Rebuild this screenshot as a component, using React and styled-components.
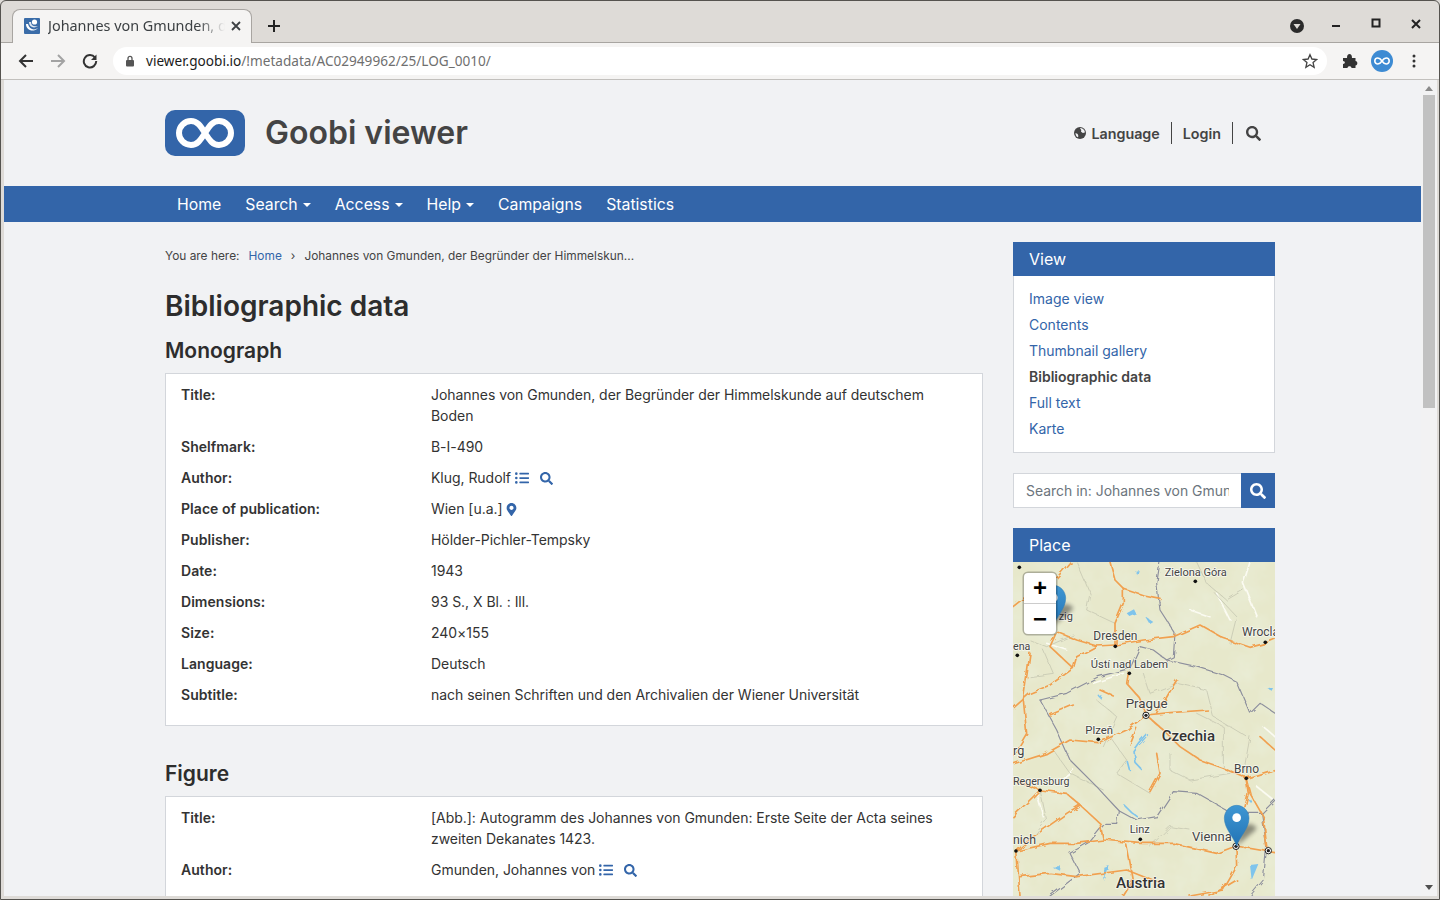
import styled, { createGlobalStyle } from 'styled-components';
import { FaSearch, FaListUl, FaMapMarkerAlt } from 'react-icons/fa';

const blue = '#3365a9';

const GlobalStyle = createGlobalStyle`
  html, body {
    margin: 0;
    height: 100%;
    overflow: hidden;
    background: #dedbd7;
  }
  * { box-sizing: border-box; }
`;

const Window = styled.div`
  width: 1440px;
  height: 900px;
  display: flex;
  flex-direction: column;
  border: 1px solid #55534f;
  border-radius: 6px 6px 0 0;
  background: #dedbd7;
  overflow: hidden;
  font-family: Inter, sans-serif;
`;

const TabStrip = styled.div`
  height: 42px;
  flex: none;
  display: flex;
  align-items: flex-end;
  padding-left: 11px;
  border-bottom: 1px solid #a8a5a1;
`;

const Tab = styled.div`
  width: 240px;
  height: 34px;
  margin-bottom: -1px;
  display: flex;
  align-items: center;
  padding: 0 9px 2px 11px;
  background: #f5f4f3;
  border: 1px solid #a8a5a1;
  border-bottom: none;
  border-radius: 8px 8px 0 0;
`;

const TabTitle = styled.span`
  width: 177px;
  margin-left: 8px;
  white-space: nowrap;
  overflow: hidden;
  font: 14.4px "Noto Sans", sans-serif;
  color: #3c4043;
  -webkit-mask-image: linear-gradient(to right, #000 150px, transparent 177px);
  mask-image: linear-gradient(to right, #000 150px, transparent 177px);
`;

const ChromeIcon = styled.svg`
  flex: none;
  display: block;
`;

const NewTab = styled.div`
  margin: 0 0 9px 15px;
  display: flex;
`;

const WindowControls = styled.div`
  margin-left: auto;
  height: 100%;
  display: flex;
  align-items: center;
  padding: 0 15px 0 0;
  gap: 24px;
`;

const Toolbar = styled.div`
  height: 37px;
  flex: none;
  display: flex;
  align-items: center;
  padding: 0 16px 0 17px;
  background: #f5f4f3;
  border-bottom: 1px solid #c2c0bd;
`;

const NavButtons = styled.div`
  display: flex;
  gap: 16px;
  align-items: center;
`;

const Omnibox = styled.div`
  width: 1214px;
  height: 28px;
  margin-left: 15px;
  display: flex;
  align-items: center;
  padding: 0 9px 0 12px;
  background: #fff;
  border-radius: 14px;
`;

const Url = styled.span`
  margin: -2px 0 0 11px;
  font: 13.6px "Noto Sans", sans-serif;
  color: #6f6f6f;
  b { font-weight: 400; color: #1b1b1b; }
`;

const ToolbarRight = styled.div`
  margin-left: 15px;
  display: flex;
  align-items: center;
  gap: 13px;
`;

const Viewport = styled.div`
  flex: 1;
  min-height: 0;
  display: flex;
  margin: 0 2px 3px 3px;
  background: #f1f2f4;
`;

const PageArea = styled.div`
  flex: 1;
  min-width: 0;
  overflow: hidden;
`;

const Scrollbar = styled.div`
  width: 16px;
  flex: none;
  display: flex;
  flex-direction: column;
  align-items: center;
  padding: 6px 0;
  background: #f2f2f3;
`;

const ScrollThumb = styled.div`
  width: 12px;
  height: 313px;
  margin: 4px 0 auto;
  background: #c1c1c1;
`;

const Inner = styled.div`
  width: 1110px;
  margin-left: 161px;
`;

const Masthead = styled.header`
  height: 106px;
  display: flex;
  align-items: flex-start;
  padding-top: 30px;
`;

const Logo = styled.svg`
  display: block;
  flex: none;
`;

const Brand = styled.div`
  margin-left: 20px;
  font-size: 32px;
  font-weight: 600;
  line-height: 46px;
  color: #444;
`;

const UserNav = styled.div`
  margin-left: auto;
  margin-right: 14px;
  margin-top: 12px;
  display: flex;
  align-items: center;
  font-size: 14.3px;
  font-weight: 600;
  color: #444;
`;

const UserItem = styled.div`
  height: 22px;
  display: flex;
  align-items: center;
  gap: 5px;
  padding: 0 11px;
  border-left: ${(p) => (p.$divider ? '1px solid #444' : 'none')};
  &:last-child { padding-right: 0; padding-left: 13px; }
`;

const MainNav = styled.nav`
  height: 36px;
  display: flex;
  align-items: center;
  padding-left: 173px;
  gap: 24px;
  background: ${blue};
`;

const NavItem = styled.div`
  display: flex;
  align-items: center;
  font-size: 15.8px;
  color: #fff;
`;

const Caret = styled.span`
  width: 0;
  height: 0;
  margin: 1px 0 0 5px;
  border-top: 4px solid #fff;
  border-left: 4px solid transparent;
  border-right: 4px solid transparent;
`;

const Columns = styled.div`
  display: flex;
  gap: 30px;
`;

const Main = styled.main`
  width: 818px;
  flex: none;
`;

const Breadcrumb = styled.div`
  margin-top: 26px;
  height: 15px;
  display: flex;
  align-items: center;
  font-size: 11.9px;
  line-height: 15px;
  color: #444;
`;

const Crumb = styled.a`
  color: ${blue};
  margin-left: 9px;
`;

const CrumbSep = styled.span`
  margin: 0 9px;
`;

const Title = styled.h1`
  margin: 26px 0 0;
  font-size: 28px;
  line-height: 35px;
  font-weight: 600;
  color: #2d2d2d;
`;

const SectionTitle = styled.h2`
  margin: ${(p) => p.$top}px 0 8px;
  font-size: 21px;
  line-height: 28px;
  font-weight: 600;
  color: #2d2d2d;
`;

const Card = styled.section`
  padding: 10px 15px 20px;
  background: #fff;
  border: 1px solid #d3d6db;
  display: flex;
  flex-direction: column;
  gap: 10px;
`;

const Row = styled.div`
  display: grid;
  grid-template-columns: 250px 1fr;
  font-size: 14px;
  line-height: 21px;
  color: #333;
`;

const Label = styled.div`
  font-weight: 600;
  letter-spacing: 0.05px;
`;

const Value = styled.div`
  display: block;
  letter-spacing: -0.04px;
`;

const InlineIcon = styled.span`
  color: ${blue};
  margin-left: ${(p) => p.$left || 4}px;
  font-size: 14px;
  svg { vertical-align: -2px; }
`;

const Sidebar = styled.aside`
  width: 262px;
  flex: none;
  padding-top: 20px;
`;

const WidgetHead = styled.div`
  height: 34px;
  display: flex;
  align-items: center;
  padding-left: 16px;
  font-size: 16px;
  color: #fff;
  background: ${blue};
`;

const ViewList = styled.div`
  height: 177px;
  padding: 10px 15px 0;
  display: flex;
  flex-direction: column;
  background: #fff;
  border: 1px solid #d3d6db;
  border-top: none;
`;

const ViewLink = styled.a`
  height: 26px;
  font-size: 14px;
  line-height: 26px;
  font-weight: ${(p) => (p.$active ? 600 : 400)};
  color: ${(p) => (p.$active ? '#444' : blue)};
`;

const SearchBox = styled.div`
  margin: 20px 0;
  height: 35px;
  display: flex;
`;

const SearchInput = styled.input`
  flex: 1;
  min-width: 0;
  padding: 0 12px;
  border: 1px solid #d3d6db;
  border-right: none;
  background: #fff;
  outline: none;
  font: 13.95px Inter, sans-serif;
  &::placeholder { color: #6c757d; opacity: 1; }
`;

const SearchButton = styled.div`
  width: 34px;
  flex: none;
  display: flex;
  align-items: center;
  justify-content: center;
  background: ${blue};
  color: #fff;
  font-size: 16px;
`;

const MapFrame = styled.div`
  position: relative;
  height: 334px;
  background: #e7e8cb;
  overflow: hidden;
`;

const MapArt = styled.svg`
  display: block;
  width: 262px;
  height: 334px;
  font-family: Roboto, sans-serif;
  text {
    fill: #444;
    paint-order: stroke;
    stroke: rgba(255, 255, 255, 0.7);
    stroke-width: 5px;
    stroke-linejoin: round;
  }
`;

const ZoomControl = styled.div`
  position: absolute;
  top: 11px;
  left: 11px;
  width: 32px;
  height: 61px;
  display: flex;
  flex-direction: column;
  background: #fff;
  border-radius: 4px;
  box-shadow: 0 0 0 1.5px rgba(0, 0, 0, 0.25);
`;

const ZoomButton = styled.div`
  flex: 1;
  display: flex;
  align-items: center;
  justify-content: center;
  font: 700 24px "Liberation Sans", sans-serif;
  color: #000;
  & + & { border-top: 1px solid #ccc; }
`;

const monograph = [
  ['Title:', 'Johannes von Gmunden, der Begründer der Himmelskunde auf deutschem Boden'],
  ['Shelfmark:', 'B-I-490'],
  ['Author:', 'Klug, Rudolf', 'person'],
  ['Place of publication:', 'Wien [u.a.]', 'place'],
  ['Publisher:', 'Hölder-Pichler-Tempsky'],
  ['Date:', '1943'],
  ['Dimensions:', '93 S., X Bl. : Ill.'],
  ['Size:', '240×155'],
  ['Language:', 'Deutsch'],
  ['Subtitle:', 'nach seinen Schriften und den Archivalien der Wiener Universität'],
];

const figure = [
  ['Title:', '[Abb.]: Autogramm des Johannes von Gmunden: Erste Seite der Acta seines zweiten Dekanates 1423.'],
  ['Author:', 'Gmunden, Johannes von', 'person'],
];

const views = ['Image view', 'Contents', 'Thumbnail gallery', 'Bibliographic data', 'Full text', 'Karte'];

// map traces, in the coordinates of the viewBox below
const roads = [
  'M300 6 L315 60 L340 85 L400 105 L450 115',
  'M340 85 L340 130 L315 190 L315 255',
  'M315 255 L400 240 L490 230 L570 195 L640 235 L720 262 L765 250 L795 238',
  'M315 255 L260 258 L200 290 L190 325 L120 375 L60 400 L9 445',
  'M140 215 L200 240 L260 258',
  'M355 340 L350 370 L385 410 L408 465',
  'M408 465 L480 458 L595 450',
  'M408 465 L350 510 L265 548 L180 540 L110 580 L9 612',
  'M408 465 L460 510 L510 560 L570 600 L640 625 L708 655 L795 628',
  'M708 655 L720 700 L760 770 L770 860',
  'M708 655 L715 700 L690 800 L678 858',
  'M90 690 L170 700 L210 735 L270 790 L280 840 L390 850 L490 850 L620 880 L678 858',
  'M20 873 L70 830 L170 760 L210 735',
  'M20 873 L120 850 L200 850 L280 840',
  'M350 855 L370 960 L340 1008',
  'M678 858 L795 878',
  'M678 858 L680 920 L640 990 L540 1008',
  'M60 280 L40 420 L50 520 L9 590',
  'M90 690 L9 660',
  'M440 580 L450 640 L420 695',
  'M500 360 L465 420 L440 458',
  'M380 505 L360 555',
  'M180 6 L110 90 L60 100 L9 140',
  'M140 215 L120 260 L190 325',
  'M120 465 L190 435',
  'M270 390 L310 408',
  'M750 530 L795 570',
  'M20 873 L30 1008',
  'M200 950 L350 930 L450 970',
  'M30 950 L120 940 L200 950',
  'M9 770 L90 690',
  'M600 1008 L680 960',
];

const borders = [
  'M90 420 L140 510 L180 600 L260 680 L325 750 L320 790 L285 790 L240 845 L180 880 L210 940 L120 1008',
  'M325 750 L380 780 L440 770 L490 695 L560 700 L640 745 L660 760 L755 760 L795 720',
  'M90 420 L170 400 L265 350 L360 325 L390 260 L430 270 L470 300 L490 290 L495 220 L450 150 L440 70 L450 6',
  'M470 300 L560 320 L640 345 L680 365 L720 460 L750 430 L795 460',
  'M755 760 L770 860 L760 960 L720 1008',
];

const minorRoads = [
  'M560 6 L590 70 L650 120 L700 90',
  'M610 95 L680 170 L660 250',
  'M200 6 L240 100 L230 150 L315 190',
  'M60 240 L110 260 L190 225',
  'M500 370 L590 390 L610 470 L710 530',
  'M300 530 L350 600 L320 640 L420 700',
  'M480 580 L480 630 L540 660 L660 640',
  'M90 690 L110 780 L70 830',
  'M420 860 L480 800 L540 810',
  'M130 570 L180 640 L280 690',
  'M400 340 L420 400 L500 370',
  'M560 460 L640 500 L640 620',
  'M720 530 L700 640',
  'M100 270 L130 340 L60 350',
  'M280 560 L320 470 L260 420',
];

const whiteRoads = [
  'M620 100 L660 180',
  'M720 6 L700 70 L740 170',
  'M250 370 L340 340',
  'M80 700 L100 770',
  'M150 660 L190 630',
  'M760 500 L795 530',
  'M740 680 L790 720',
  'M540 150 L600 170',
  'M110 250 L170 270',
];

const lakeLines = [
  'M412 525 L390 550 L372 575 L378 610 L392 625',
  'M345 738 L362 755 L382 770',
  'M352 605 L358 628',
];

const lakes = [
  'M350 160 L372 148 L378 160 L358 168 Z',
  'M408 172 L430 186 L420 192 Z',
  'M376 32 L386 30 L382 46 Z',
  'M262 405 L272 402 L268 414 Z',
  'M720 915 L745 912 L725 960 Z',
  'M280 920 L296 915 L280 960 Z',
  'M125 920 L152 918 L150 932 Z',
  'M710 715 L726 720 L720 726 Z',
  'M770 385 L790 382 L785 392 Z',
];

const labels = [
  ['Zielona Góra', 464, 48, 33],
  ['Dresden', 250, 241, 36],
  ['Wrocla', 696, 228, 36],
  ['ena', 9, 270, 32],
  ['Ústí nad Labem', 242, 325, 33.5],
  ['Prague', 347, 444, 40],
  ['Plzeň', 226, 521, 34],
  ['rg', 9, 584, 38],
  ['Regensburg', 9, 676, 32],
  ['Brno', 672, 638, 36],
  ['Linz', 359, 820, 33],
  ['Vienna', 546, 844, 39],
  ['nich', 9, 852, 37],
  ['zig', 146, 179, 33],
];

const towns = [
  [556, 64], [28, 22], [316, 259], [22, 286], [358, 340], [766, 247], [265, 538],
  [90, 691], [709, 655], [391, 838], [18, 873],
];

const capitals = [[408, 466], [678, 859], [775, 872]];

function Pin({ x, y }) {
  return (
    <g transform={`translate(${x} ${y})`}>
      <path d="M0 0 L52 -44 Q70 -58 40 -66 L18 -62 Z" fill="#000" opacity="0.4" filter="url(#soft)" />
      <path
        d="M0 0 C-8 -26 -37 -52 -37 -83 C-37 -105 -20 -122 0 -122 C20 -122 37 -105 37 -83 C37 -52 8 -26 0 0 Z"
        fill="url(#pinBlue)"
        stroke="#2a7ab5"
        strokeWidth="1.5"
      />
      <circle cx="0" cy="-85" r="13" fill="#fff" />
    </g>
  );
}

function MapSvg() {
  return (
    <MapArt viewBox="9 6 786 1002">
      <defs>
        <linearGradient id="pinBlue" x1="0" y1="0" x2="0" y2="1">
          <stop offset="0" stopColor="#3f97d3" />
          <stop offset="1" stopColor="#2273b5" />
        </linearGradient>
        <filter id="soft" x="-50%" y="-50%" width="200%" height="200%">
          <feGaussianBlur stdDeviation="7" />
        </filter>
        <filter id="wobble" x="-5%" y="-5%" width="110%" height="110%">
          <feTurbulence type="fractalNoise" baseFrequency="0.035" numOctaves="2" seed="4" />
          <feDisplacementMap in="SourceGraphic" scale="16" />
        </filter>
        <filter id="relief" x="0" y="0" width="100%" height="100%">
          <feTurbulence type="fractalNoise" baseFrequency="0.012" numOctaves="4" seed="9" />
          <feColorMatrix values="0 0 0 0 0.82  0 0 0 0 0.85  0 0 0 0 0.68  1.6 0 0 0 -0.55" />
        </filter>
      </defs>
      <rect x="9" y="6" width="786" height="1002" filter="url(#relief)" />
      <g filter="url(#wobble)" fill="none" strokeLinejoin="round" strokeLinecap="round">
        <g stroke="#fbfbf2" strokeWidth="5">
          {whiteRoads.map((d) => <path key={d} d={d} />)}
        </g>
        <g stroke="#c6c8b2" strokeWidth="2.5">
          {minorRoads.map((d) => <path key={d} d={d} />)}
        </g>
        <g stroke="#7fc4ec" strokeWidth="5">
          {lakeLines.map((d) => <path key={d} d={d} />)}
        </g>
        <g fill="#7fc4ec">
          {lakes.map((d) => <path key={d} d={d} />)}
        </g>
        <g stroke="#8d8f9d" strokeWidth="3.5">
          {borders.map((d) => <path key={d} d={d} />)}
        </g>
        <g stroke="#f1a04f" strokeWidth="5">
          {roads.map((d) => <path key={d} d={d} />)}
        </g>
      </g>
      {labels.map(([name, x, y, size]) => (
        <text key={name} x={x} y={y} fontSize={size}>{name}</text>
      ))}
      <text x="455" y="542" fontSize="45" fontWeight="500" style={{ fill: '#333' }}>Czechia</text>
      <text x="318" y="984" fontSize="46" fontWeight="500" style={{ fill: '#333' }}>Austria</text>
      {towns.map(([x, y]) => (
        <circle key={`${x}-${y}`} cx={x} cy={y} r="5.5" fill="#111" />
      ))}
      {capitals.map(([x, y]) => (
        <g key={`${x}-${y}`}>
          <circle cx={x} cy={y} r="9.5" fill="#fff" stroke="#222" strokeWidth="3" />
          <circle cx={x} cy={y} r="5" fill="#222" />
        </g>
      ))}
      <Pin x={130} y={198} />
      <Pin x={680} y={858} />
    </MapArt>
  );
}

function RowIcons({ kind }) {
  if (kind === 'person') {
    return (
      <>
        <InlineIcon><FaListUl /></InlineIcon>
        <InlineIcon $left={11}><FaSearch size={13} /></InlineIcon>
      </>
    );
  }
  if (kind === 'place') {
    return <InlineIcon $left={2}><FaMapMarkerAlt size={13} /></InlineIcon>;
  }
  return null;
}

function MetadataCard({ rows }) {
  return (
    <Card>
      {rows.map(([label, value, kind]) => (
        <Row key={label}>
          <Label>{label}</Label>
          <Value>{value}<RowIcons kind={kind} /></Value>
        </Row>
      ))}
    </Card>
  );
}

function BrowserChrome() {
  return (
    <>
      <TabStrip>
        <Tab>
          <ChromeIcon width="16" height="16" viewBox="0 0 16 16">
            <rect width="16" height="16" rx="1" fill="#3a6ca8" />
            <path d="M2 6 C2 12 9 15 14 10 C10 13 5 11 4 6 Z" fill="#fff" />
            <path d="M5 4 C5 9 10 11 14 8 C10 9 7 8 7 4 Z" fill="#dfe8f2" />
            <circle cx="10.5" cy="4" r="2.6" fill="#fff" />
          </ChromeIcon>
          <TabTitle>Johannes von Gmunden, der Begründer</TabTitle>
          <ChromeIcon width="12" height="12" viewBox="0 0 12 12" style={{ marginLeft: 5 }}>
            <path d="M2 2 L10 10 M10 2 L2 10" stroke="#3c4043" strokeWidth="1.8" />
          </ChromeIcon>
        </Tab>
        <NewTab>
          <ChromeIcon width="14" height="14" viewBox="0 0 14 14">
            <path d="M7 1 V13 M1 7 H13" stroke="#222" strokeWidth="2" />
          </ChromeIcon>
        </NewTab>
        <WindowControls>
          <ChromeIcon width="14" height="14" viewBox="0 0 14 14" style={{ marginTop: 9 }}>
            <circle cx="7" cy="7" r="7" fill="#2b2b2b" />
            <path d="M3.5 5 H10.5 L7 10 Z" fill="#dedbd7" />
          </ChromeIcon>
          <ChromeIcon width="16" height="16" viewBox="0 0 16 16" style={{ marginTop: 4 }}>
            <path d="M4 10 H12" stroke="#222" strokeWidth="2" />
          </ChromeIcon>
          <ChromeIcon width="16" height="16" viewBox="0 0 16 16" style={{ marginTop: 3 }}>
            <rect x="4.5" y="4.5" width="7" height="7" fill="none" stroke="#222" strokeWidth="2" />
          </ChromeIcon>
          <ChromeIcon width="16" height="16" viewBox="0 0 16 16" style={{ marginTop: 5 }}>
            <path d="M4 4 L12 12 M12 4 L4 12" stroke="#222" strokeWidth="2" />
          </ChromeIcon>
        </WindowControls>
      </TabStrip>
      <Toolbar>
        <NavButtons>
          <ChromeIcon width="16" height="16" viewBox="0 0 16 16">
            <path d="M15 8 H2 M8 2 L2 8 L8 14" fill="none" stroke="#333" strokeWidth="2" />
          </ChromeIcon>
          <ChromeIcon width="16" height="16" viewBox="0 0 16 16">
            <path d="M1 8 H14 M8 2 L14 8 L8 14" fill="none" stroke="#a3a3a3" strokeWidth="2" />
          </ChromeIcon>
          <ChromeIcon width="16" height="16" viewBox="0 0 16 16">
            <path d="M13 4.6 A6.2 6.2 0 1 0 14.2 8" fill="none" stroke="#333" strokeWidth="2" />
            <path d="M14.5 1.5 V7 H9 Z" fill="#333" />
          </ChromeIcon>
        </NavButtons>
        <Omnibox>
          <ChromeIcon width="10" height="12" viewBox="0 0 10 12">
            <rect x="1" y="5" width="8" height="6.5" rx="1" fill="#555" />
            <path d="M3 5 V3.4 A2 2 0 0 1 7 3.4 V5" fill="none" stroke="#555" strokeWidth="1.3" />
          </ChromeIcon>
          <Url><b>viewer.goobi.io</b>/!metadata/AC02949962/25/LOG_0010/</Url>
          <ChromeIcon width="16" height="16" viewBox="0 0 24 24" style={{ marginLeft: 'auto' }}>
            <path d="M12 2.5 L14.9 9 L22 9.7 L16.6 14.4 L18.2 21.4 L12 17.7 L5.8 21.4 L7.4 14.4 L2 9.7 L9.1 9 Z" fill="none" stroke="#444" strokeWidth="2" />
          </ChromeIcon>
        </Omnibox>
        <ToolbarRight>
          <ChromeIcon width="16" height="16" viewBox="0 0 16 16">
            <path d="M1 5 H5 C5 2 6 1 7.5 1 C9 1 10 2 10 5 H13.5 V8 C16 8 16 12.5 13.5 12.5 V15 H9.5 C9.5 12.5 5.5 12.5 5.5 15 H1 V11 C3.5 11 3.5 8 1 8 Z" fill="#333" />
          </ChromeIcon>
          <ChromeIcon width="22" height="22" viewBox="0 0 22 22">
            <circle cx="11" cy="11" r="11" fill="#3d8bd3" />
            <path d="M11 11 C9 8 7.8 8 6.8 8 A3 3 0 0 0 6.8 14 C7.8 14 9 14 11 11 C13 8 14.2 8 15.2 8 A3 3 0 0 1 15.2 14 C14.2 14 13 14 11 11 Z" fill="none" stroke="#fff" strokeWidth="1.6" />
          </ChromeIcon>
          <ChromeIcon width="16" height="16" viewBox="0 0 16 16">
            <circle cx="8" cy="3" r="1.5" fill="#333" />
            <circle cx="8" cy="8" r="1.5" fill="#333" />
            <circle cx="8" cy="13" r="1.5" fill="#333" />
          </ChromeIcon>
        </ToolbarRight>
      </Toolbar>
    </>
  );
}

export default function App() {
  return (
    <>
      <GlobalStyle />
      <Window>
        <BrowserChrome />
        <Viewport>
          <PageArea>
            <Inner>
              <Masthead>
                <Logo width="80" height="46" viewBox="0 0 80 46">
                  <rect width="80" height="46" rx="10" fill={blue} />
                  <path
                    d="M40 23 C35 15 32 11 26 11 A12 12 0 0 0 26 35 C32 35 35 31 40 23 C45 15 48 11 54 11 A12 12 0 0 1 54 35 C48 35 45 31 40 23 Z"
                    fill="none"
                    stroke="#fff"
                    strokeWidth="6"
                  />
                </Logo>
                <Brand>Goobi viewer</Brand>
                <UserNav>
                  <UserItem>
                    <ChromeIcon width="12" height="12" viewBox="0 0 13 13">
                      <circle cx="6.5" cy="6.5" r="6.5" fill="#444" />
                      <path d="M6.5 1.2 C9.5 1.2 11.8 3.6 11.8 6 L9.6 6.6 L7.6 5.2 L7.9 3.4 Z" fill="#f1f2f4" />
                      <path d="M1.6 6.4 L4 7.6 L4.8 10 L3.8 11 C2.4 10 1.6 8.3 1.6 6.4 Z" fill="#f1f2f4" />
                    </ChromeIcon>
                    Language
                  </UserItem>
                  <UserItem $divider>Login</UserItem>
                  <UserItem $divider><FaSearch size={15} /></UserItem>
                </UserNav>
              </Masthead>
            </Inner>
            <MainNav>
              <NavItem>Home</NavItem>
              <NavItem>Search<Caret /></NavItem>
              <NavItem>Access<Caret /></NavItem>
              <NavItem>Help<Caret /></NavItem>
              <NavItem>Campaigns</NavItem>
              <NavItem>Statistics</NavItem>
            </MainNav>
            <Inner>
              <Columns>
                <Main>
                  <Breadcrumb>
                    You are here:
                    <Crumb>Home</Crumb>
                    <CrumbSep>›</CrumbSep>
                    Johannes von Gmunden, der Begründer der Himmelskun...
                  </Breadcrumb>
                  <Title>Bibliographic data</Title>
                  <SectionTitle $top={13}>Monograph</SectionTitle>
                  <MetadataCard rows={monograph} />
                  <SectionTitle $top={34}>Figure</SectionTitle>
                  <MetadataCard rows={figure} />
                </Main>
                <Sidebar>
                  <WidgetHead>View</WidgetHead>
                  <ViewList>
                    {views.map((v) => (
                      <ViewLink key={v} $active={v === 'Bibliographic data'}>{v}</ViewLink>
                    ))}
                  </ViewList>
                  <SearchBox>
                    <SearchInput placeholder="Search in: Johannes von Gmunden, der Begründer" />
                    <SearchButton><FaSearch /></SearchButton>
                  </SearchBox>
                  <WidgetHead>Place</WidgetHead>
                  <MapFrame>
                    <MapSvg />
                    <ZoomControl>
                      <ZoomButton>+</ZoomButton>
                      <ZoomButton>−</ZoomButton>
                    </ZoomControl>
                  </MapFrame>
                </Sidebar>
              </Columns>
            </Inner>
          </PageArea>
          <Scrollbar>
            <ChromeIcon width="8" height="5" viewBox="0 0 8 5">
              <path d="M4 0 L8 5 H0 Z" fill="#8a8a8a" />
            </ChromeIcon>
            <ScrollThumb />
            <ChromeIcon width="8" height="5" viewBox="0 0 8 5">
              <path d="M0 0 H8 L4 5 Z" fill="#505050" />
            </ChromeIcon>
          </Scrollbar>
        </Viewport>
      </Window>
    </>
  );
}
